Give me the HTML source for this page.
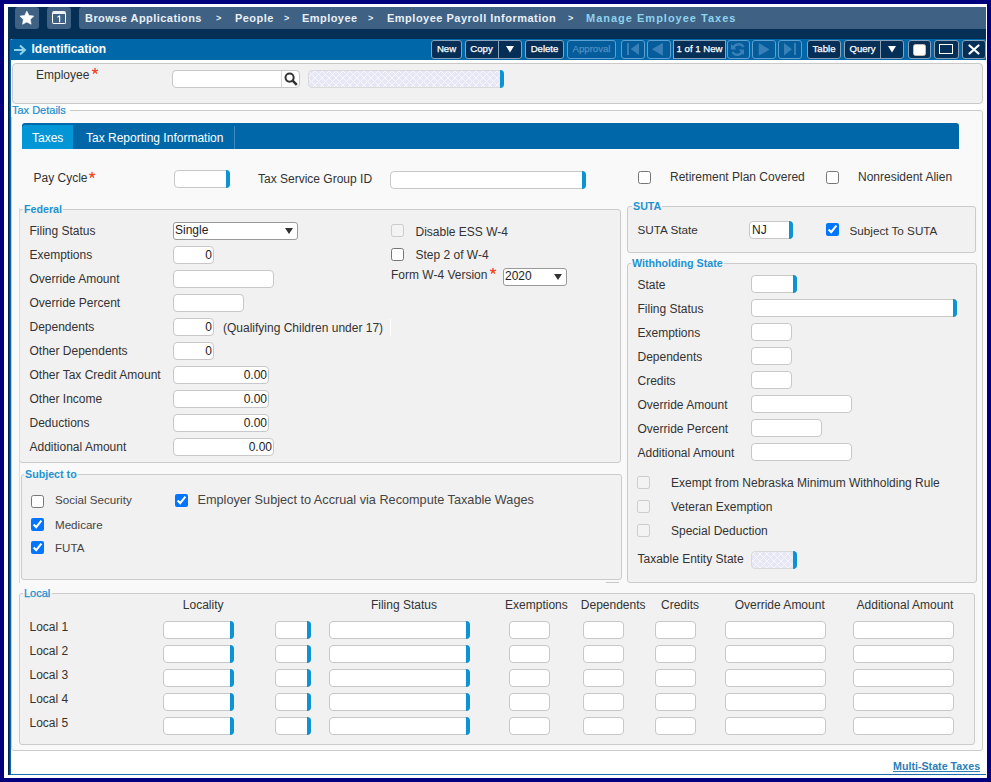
<!DOCTYPE html><html><head><meta charset="utf-8"><style>html,body{margin:0;padding:0;}body{width:991px;height:782px;position:relative;overflow:hidden;background:#00007f;font-family:"Liberation Sans", sans-serif;}</style></head><body>
<div style="position:absolute;left:4px;top:4px;width:983px;height:774px;background:#fff"></div>
<div style="position:absolute;left:8px;top:7px;width:978px;height:768px;background:#fff"></div>
<div style="position:absolute;left:8px;top:774px;width:978px;height:1px;background:#1a6eae"></div>
<div style="position:absolute;left:8px;top:7px;width:978px;height:32px;background:#062f56"></div>
<div style="position:absolute;left:15px;top:7px;width:24px;height:22px;background:#3e6184;border-radius:3px"></div>
<div style="position:absolute;left:47px;top:7px;width:24px;height:22px;background:#3e6184;border-radius:3px"></div>
<div style="position:absolute;left:79px;top:7px;width:907px;height:22px;background:#3e6184;border-radius:3px 0 0 3px"></div>
<svg style="position:absolute;left:0;top:0" width="60" height="30"><path d="M26.85 11.10 L28.99 15.43 L33.76 16.12 L30.31 19.49 L31.12 24.25 L26.85 22.01 L22.58 24.25 L23.39 19.49 L19.94 16.12 L24.71 15.43 Z" fill="#fff" stroke="#fff" stroke-width="0.6" stroke-linejoin="round"/></svg>
<div style="position:absolute;left:52px;top:11px;width:14px;height:13px;box-sizing:border-box;border:1px solid #fff;border-top:3px solid #eef1f4;border-radius:2px"></div>
<svg style="position:absolute;left:52px;top:11px" width="14" height="13"><path d="M7.6 4.6 V11.2 M5.4 6.4 L7.6 4.6" stroke="#fff" stroke-width="1.2" fill="none"/></svg>
<div style="position:absolute;left:85px;top:12.49px;line-height:13px;font-size:11px;color:#eaf0f6;font-weight:700;white-space:nowrap;letter-spacing:0.45px">Browse Applications</div>
<div style="position:absolute;left:216px;top:13.18px;line-height:11px;font-size:9px;color:#eaf0f6;font-weight:700;white-space:nowrap;">&gt;</div>
<div style="position:absolute;left:235px;top:12.49px;line-height:13px;font-size:11px;color:#eaf0f6;font-weight:700;white-space:nowrap;letter-spacing:0.45px">People</div>
<div style="position:absolute;left:284px;top:13.18px;line-height:11px;font-size:9px;color:#eaf0f6;font-weight:700;white-space:nowrap;">&gt;</div>
<div style="position:absolute;left:302px;top:12.49px;line-height:13px;font-size:11px;color:#eaf0f6;font-weight:700;white-space:nowrap;letter-spacing:0.45px">Employee</div>
<div style="position:absolute;left:368px;top:13.18px;line-height:11px;font-size:9px;color:#eaf0f6;font-weight:700;white-space:nowrap;">&gt;</div>
<div style="position:absolute;left:387px;top:12.49px;line-height:13px;font-size:11px;color:#eaf0f6;font-weight:700;white-space:nowrap;letter-spacing:0.5px">Employee Payroll Information</div>
<div style="position:absolute;left:568px;top:13.18px;line-height:11px;font-size:9px;color:#eaf0f6;font-weight:700;white-space:nowrap;">&gt;</div>
<div style="position:absolute;left:586px;top:12.49px;line-height:13px;font-size:11px;color:#8fd3ec;font-weight:700;white-space:nowrap;letter-spacing:1px">Manage Employee Taxes</div>
<div style="position:absolute;left:10px;top:39px;width:976px;height:21px;background:#0068a9;border-radius:3px 0 0 0"></div>
<svg style="position:absolute;left:13px;top:43px" width="14" height="14" viewBox="0 0 14 14"><path d="M1 7 H11.5 M7 2.5 L11.8 7 L7 11.5" stroke="#8dd2e8" stroke-width="2.2" fill="none"/></svg>
<div style="position:absolute;left:31.5px;top:41.64px;line-height:14px;font-size:12px;color:#fff;font-weight:700;white-space:nowrap;">Identification</div>
<div style="position:absolute;left:431px;top:40px;width:31px;height:19px;box-sizing:border-box;border:1px solid #8aa0b6;border-radius:3px;background:#062f58"></div>
<div style="position:absolute;left:431px;top:40px;width:31px;line-height:18px;text-align:center;font-size:9.6px;font-weight:400;-webkit-text-stroke:0.25px currentColor;color:#fff;white-space:nowrap">New</div>
<div style="position:absolute;left:465px;top:40px;width:57px;height:19px;box-sizing:border-box;border:1px solid #8aa0b6;border-radius:3px;background:#062f58"></div>
<div style="position:absolute;left:465px;top:40px;width:33px;line-height:18px;text-align:center;font-size:9.6px;font-weight:400;-webkit-text-stroke:0.25px currentColor;color:#fff">Copy</div>
<div style="position:absolute;left:498px;top:41px;width:1px;height:17px;background:#8aa0b6"></div>
<svg style="position:absolute;left:506px;top:46px" width="8" height="7"><path d="M0 0 H8 L4 6.5 Z" fill="#fff"/></svg>
<div style="position:absolute;left:525px;top:40px;width:39px;height:19px;box-sizing:border-box;border:1px solid #8aa0b6;border-radius:3px;background:#062f58"></div>
<div style="position:absolute;left:525px;top:40px;width:39px;line-height:18px;text-align:center;font-size:9.6px;font-weight:400;-webkit-text-stroke:0.25px currentColor;color:#fff;white-space:nowrap">Delete</div>
<div style="position:absolute;left:567px;top:40px;width:49px;height:19px;box-sizing:border-box;border:1px solid #5d9fd0;border-radius:3px;background:#045c9a"></div>
<div style="position:absolute;left:567px;top:40px;width:49px;line-height:18px;text-align:center;font-size:9.6px;font-weight:400;-webkit-text-stroke:0.25px currentColor;color:#4f8fc2;white-space:nowrap">Approval</div>
<div style="position:absolute;left:621px;top:40px;width:24px;height:19px;box-sizing:border-box;border:1px solid #5d9fd0;border-radius:3px;background:#045c9a"></div>
<div style="position:absolute;left:647px;top:40px;width:24px;height:19px;box-sizing:border-box;border:1px solid #5d9fd0;border-radius:3px;background:#045c9a"></div>
<svg style="position:absolute;left:621px;top:40px" width="24" height="19"><rect x="6" y="3" width="2" height="12" fill="#3a80b8"/><path d="M9.7 9 L18 3 V15 Z" fill="#3a80b8"/></svg>
<svg style="position:absolute;left:647px;top:40px" width="24" height="19"><path d="M4.9 9.3 L15.9 2.8 V15.8 Z" fill="#3a80b8"/></svg>
<div style="position:absolute;left:673px;top:40px;width:53px;height:19px;box-sizing:border-box;border:1px solid #8aa0b6;border-radius:0px;background:#062f58"></div>
<div style="position:absolute;left:673px;top:40px;width:53px;line-height:18px;text-align:center;font-size:9.6px;font-weight:400;-webkit-text-stroke:0.25px currentColor;color:#fff;white-space:nowrap">1 of 1 New</div>
<div style="position:absolute;left:727px;top:40px;width:23px;height:19px;box-sizing:border-box;border:1px solid #5d9fd0;border-radius:3px;background:#045c9a"></div>
<svg style="position:absolute;left:727px;top:40px" width="23" height="19"><path d="M6.5 8 A5.5 5.5 0 0 1 16.5 7" stroke="#3a80b8" stroke-width="2.4" fill="none"/><path d="M4 4 L4 9.5 L9.5 9.5 Z" fill="#3a80b8"/><path d="M15.5 11 A5.5 5.5 0 0 1 5.5 12" stroke="#3a80b8" stroke-width="2.4" fill="none"/><path d="M17 15 L17 9.5 L11.5 9.5 Z" fill="#3a80b8"/></svg>
<div style="position:absolute;left:752px;top:40px;width:24px;height:19px;box-sizing:border-box;border:1px solid #5d9fd0;border-radius:3px;background:#045c9a"></div>
<svg style="position:absolute;left:752px;top:40px" width="24" height="19"><path d="M6.8 3 L17.7 9.4 L6.8 15.8 Z" fill="#3a80b8"/></svg>
<div style="position:absolute;left:778px;top:40px;width:24px;height:19px;box-sizing:border-box;border:1px solid #5d9fd0;border-radius:3px;background:#045c9a"></div>
<svg style="position:absolute;left:778px;top:40px" width="24" height="19"><path d="M6 3 L13.9 9.2 L6 15.5 Z" fill="#3a80b8"/><rect x="16" y="3" width="2" height="12" fill="#3a80b8"/></svg>
<div style="position:absolute;left:807px;top:40px;width:34px;height:19px;box-sizing:border-box;border:1px solid #8aa0b6;border-radius:3px;background:#062f58"></div>
<div style="position:absolute;left:807px;top:40px;width:34px;line-height:18px;text-align:center;font-size:9.6px;font-weight:400;-webkit-text-stroke:0.25px currentColor;color:#fff;white-space:nowrap">Table</div>
<div style="position:absolute;left:844px;top:40px;width:60px;height:19px;box-sizing:border-box;border:1px solid #8aa0b6;border-radius:3px;background:#062f58"></div>
<div style="position:absolute;left:844px;top:40px;width:37px;line-height:18px;text-align:center;font-size:9.6px;font-weight:400;-webkit-text-stroke:0.25px currentColor;color:#fff">Query</div>
<div style="position:absolute;left:880px;top:41px;width:1px;height:17px;background:#8aa0b6"></div>
<svg style="position:absolute;left:888px;top:46px" width="8" height="7"><path d="M0 0 H8 L4 6.5 Z" fill="#fff"/></svg>
<div style="position:absolute;left:908px;top:40px;width:23px;height:19px;box-sizing:border-box;border:1px solid #8aa0b6;border-radius:3px;background:#062f58"></div>
<div style="position:absolute;left:913px;top:44px;width:13px;height:12px;box-sizing:border-box;background:#fff;border:1px solid #c9b9b0;border-radius:2.5px"></div>
<div style="position:absolute;left:934px;top:40px;width:25px;height:19px;box-sizing:border-box;border:1px solid #8aa0b6;border-radius:3px;background:#062f58"></div>
<div style="position:absolute;left:939px;top:44px;width:14px;height:10px;box-sizing:border-box;border:1.5px solid #fff"></div>
<div style="position:absolute;left:962px;top:40px;width:24px;height:19px;box-sizing:border-box;border:1px solid #8aa0b6;border-radius:3px;background:#062f58"></div>
<svg style="position:absolute;left:968px;top:44px" width="12" height="11"><path d="M1.5 1.5 L10.5 9.5 M10.5 1.5 L1.5 9.5" stroke="#fff" stroke-width="2.2" stroke-linecap="round"/></svg>
<div style="position:absolute;left:12px;top:63px;width:971px;height:41px;box-sizing:border-box;border:1px solid #c9c9c9;border-radius:4px;background:#f1f1f1"></div>
<div style="position:absolute;left:36px;top:67.84px;line-height:14px;font-size:12px;color:#333;font-weight:400;white-space:nowrap;">Employee</div>
<svg style="position:absolute;left:91px;top:67px" width="8" height="8" viewBox="-4 -4 8 8"><g stroke="#f7452a" stroke-width="1.35" stroke-linecap="round"><path d="M0 0 V-2.5"/><path d="M0 0 L-2.5 -0.7"/><path d="M0 0 L2.5 -0.7"/><path d="M0 0 L-1.5 2.2"/><path d="M0 0 L1.5 2.2"/></g></svg>
<div style="position:absolute;left:172px;top:70px;width:128px;height:18px;box-sizing:border-box;border:1px solid #c8c8c8;border-radius:4px;background:#fff;"></div>
<svg style="position:absolute;left:284px;top:72px" width="14" height="14" viewBox="0 0 14 14"><circle cx="5.6" cy="5.6" r="4.1" stroke="#333" stroke-width="2" fill="none"/><path d="M8.6 8.6 L12.8 12.8" stroke="#333" stroke-width="2.6"/></svg>
<div style="position:absolute;left:281px;top:71px;width:1px;height:16px;background:#d8d8d8"></div>
<div style="position:absolute;left:308px;top:70px;width:196px;height:18px;box-sizing:border-box;border:1px solid #dadada;border-radius:4px;background:repeating-linear-gradient(45deg, #f7f7fb 0 0.9px, transparent 0.9px 4.95px),repeating-linear-gradient(-45deg, #f7f7fb 0 0.9px, transparent 0.9px 4.95px), #e6e6f4;"><div style="position:absolute;right:-1px;top:-1px;width:4px;height:18px;background:#0b93d6;border-radius:0 4px 4px 0"></div></div>
<div style="position:absolute;left:11px;top:110px;width:972px;height:641px;box-sizing:border-box;border:1px solid #cbcbcb;border-radius:3px;background:#f9f9f9"></div>
<div style="position:absolute;left:11px;top:103.19px;line-height:14px;font-size:11px;font-weight:400;color:#1a8fd0;white-space:nowrap;padding:0 4px 0 1px;-webkit-text-stroke:0.2px #1a8fd0;background:linear-gradient(to bottom,transparent 0,transparent 6.81px,#f9f9f9 6.81px)">Tax Details</div>
<div style="position:absolute;left:22px;top:123px;width:937px;height:26px;background:#0067a9;border-radius:3px 3px 0 0"></div>
<div style="position:absolute;left:22px;top:125px;width:51px;height:24px;background:#0396d6;border-radius:3px 0 0 0"></div>
<div style="position:absolute;left:234px;top:126px;width:1px;height:23px;background:#3b88c2"></div>
<div style="position:absolute;left:32px;top:131.24px;line-height:14px;font-size:12px;color:#fff;font-weight:400;white-space:nowrap;">Taxes</div>
<div style="position:absolute;left:86px;top:131.24px;line-height:14px;font-size:12px;color:#fff;font-weight:400;white-space:nowrap;">Tax Reporting Information</div>
<div style="position:absolute;left:33.5px;top:171.04px;line-height:14px;font-size:12px;color:#333;font-weight:400;white-space:nowrap;">Pay Cycle</div>
<svg style="position:absolute;left:88.4px;top:170.5px" width="8" height="8" viewBox="-4 -4 8 8"><g stroke="#f7452a" stroke-width="1.35" stroke-linecap="round"><path d="M0 0 V-2.5"/><path d="M0 0 L-2.5 -0.7"/><path d="M0 0 L2.5 -0.7"/><path d="M0 0 L-1.5 2.2"/><path d="M0 0 L1.5 2.2"/></g></svg>
<div style="position:absolute;left:174px;top:170px;width:56px;height:18px;box-sizing:border-box;border:1px solid #c8c8c8;border-radius:4px;background:#fff;"><div style="position:absolute;right:-1px;top:-1px;width:4px;height:18px;background:#0b93d6;border-radius:0 4px 4px 0"></div></div>
<div style="position:absolute;left:258px;top:171.84px;line-height:14px;font-size:12px;color:#333;font-weight:400;white-space:nowrap;">Tax Service Group ID</div>
<div style="position:absolute;left:390px;top:171px;width:196px;height:18px;box-sizing:border-box;border:1px solid #c8c8c8;border-radius:4px;background:#fff;"><div style="position:absolute;right:-1px;top:-1px;width:4px;height:18px;background:#0b93d6;border-radius:0 4px 4px 0"></div></div>
<input type="checkbox"   style="position:absolute;left:638px;top:171px;width:13px;height:13px;margin:0">
<div style="position:absolute;left:670px;top:170.34px;line-height:14px;font-size:12px;color:#333;font-weight:400;white-space:nowrap;">Retirement Plan Covered</div>
<input type="checkbox"   style="position:absolute;left:826px;top:171px;width:13px;height:13px;margin:0">
<div style="position:absolute;left:858px;top:170.34px;line-height:14px;font-size:12px;color:#333;font-weight:400;white-space:nowrap;">Nonresident Alien</div>
<div style="position:absolute;left:19px;top:209px;width:602px;height:254px;box-sizing:border-box;border:1px solid #cbcbcb;border-radius:3px;background:#f1f1f1"></div>
<div style="position:absolute;left:23px;top:202.29px;line-height:14px;font-size:10.7px;font-weight:700;color:#1e93d2;white-space:nowrap;padding:0 1px 0 1px;background:linear-gradient(to bottom,transparent 0,transparent 6.71px,#f1f1f1 6.71px)">Federal</div>
<div style="position:absolute;left:173px;top:222px;width:125px;height:18px;box-sizing:border-box;border:1px solid #9a9a9a;border-radius:3px;background:#fff"></div>
<div style="position:absolute;left:175px;top:223.04px;line-height:14px;font-size:12px;color:#222;font-weight:400;white-space:nowrap;">Single</div>
<svg style="position:absolute;left:285px;top:228px" width="8" height="6"><path d="M0 0 H8 L4 6 Z" fill="#333"/></svg>
<div style="position:absolute;left:29.5px;top:223.84px;line-height:14px;font-size:12px;color:#333;font-weight:400;white-space:nowrap;">Filing Status</div>
<div style="position:absolute;left:29.5px;top:247.84px;line-height:14px;font-size:12px;color:#333;font-weight:400;white-space:nowrap;">Exemptions</div>
<div style="position:absolute;left:29.5px;top:271.84px;line-height:14px;font-size:12px;color:#333;font-weight:400;white-space:nowrap;">Override Amount</div>
<div style="position:absolute;left:29.5px;top:295.84px;line-height:14px;font-size:12px;color:#333;font-weight:400;white-space:nowrap;">Override Percent</div>
<div style="position:absolute;left:29.5px;top:319.84px;line-height:14px;font-size:12px;color:#333;font-weight:400;white-space:nowrap;">Dependents</div>
<div style="position:absolute;left:29.5px;top:343.84px;line-height:14px;font-size:12px;color:#333;font-weight:400;white-space:nowrap;">Other Dependents</div>
<div style="position:absolute;left:29.5px;top:367.84px;line-height:14px;font-size:12px;color:#333;font-weight:400;white-space:nowrap;">Other Tax Credit Amount</div>
<div style="position:absolute;left:29.5px;top:391.84px;line-height:14px;font-size:12px;color:#333;font-weight:400;white-space:nowrap;">Other Income</div>
<div style="position:absolute;left:29.5px;top:415.84px;line-height:14px;font-size:12px;color:#333;font-weight:400;white-space:nowrap;">Deductions</div>
<div style="position:absolute;left:29.5px;top:439.84px;line-height:14px;font-size:12px;color:#333;font-weight:400;white-space:nowrap;">Additional Amount</div>
<div style="position:absolute;left:173px;top:246px;width:41px;height:18px;box-sizing:border-box;border:1px solid #c8c8c8;border-radius:4px;background:#fff;"><div style="position:absolute;right:1px;top:0;line-height:16px;font-size:12px;color:#222">0</div></div>
<div style="position:absolute;left:173px;top:270px;width:101px;height:18px;box-sizing:border-box;border:1px solid #c8c8c8;border-radius:4px;background:#fff;"></div>
<div style="position:absolute;left:173px;top:294px;width:71px;height:18px;box-sizing:border-box;border:1px solid #c8c8c8;border-radius:4px;background:#fff;"></div>
<div style="position:absolute;left:173px;top:318px;width:41px;height:18px;box-sizing:border-box;border:1px solid #c8c8c8;border-radius:4px;background:#fff;"><div style="position:absolute;right:1px;top:0;line-height:16px;font-size:12px;color:#222">0</div></div>
<div style="position:absolute;left:223px;top:320.84px;line-height:14px;font-size:12px;color:#333;font-weight:400;white-space:nowrap;">(Qualifying Children under 17)</div>
<div style="position:absolute;left:390px;top:319px;width:1px;height:17px;background:#fff"></div>
<div style="position:absolute;left:173px;top:342px;width:41px;height:18px;box-sizing:border-box;border:1px solid #c8c8c8;border-radius:4px;background:#fff;"><div style="position:absolute;right:1px;top:0;line-height:16px;font-size:12px;color:#222">0</div></div>
<div style="position:absolute;left:173px;top:366px;width:96px;height:18px;box-sizing:border-box;border:1px solid #c8c8c8;border-radius:4px;background:#fff;"><div style="position:absolute;right:1px;top:0;line-height:16px;font-size:12px;color:#222">0.00</div></div>
<div style="position:absolute;left:173px;top:390px;width:96px;height:18px;box-sizing:border-box;border:1px solid #c8c8c8;border-radius:4px;background:#fff;"><div style="position:absolute;right:1px;top:0;line-height:16px;font-size:12px;color:#222">0.00</div></div>
<div style="position:absolute;left:173px;top:414px;width:96px;height:18px;box-sizing:border-box;border:1px solid #c8c8c8;border-radius:4px;background:#fff;"><div style="position:absolute;right:1px;top:0;line-height:16px;font-size:12px;color:#222">0.00</div></div>
<div style="position:absolute;left:173px;top:438px;width:101px;height:18px;box-sizing:border-box;border:1px solid #c8c8c8;border-radius:4px;background:#fff;"><div style="position:absolute;right:1px;top:0;line-height:16px;font-size:12px;color:#222">0.00</div></div>
<input type="checkbox"  disabled style="position:absolute;left:391px;top:224px;width:13px;height:13px;margin:0">
<div style="position:absolute;left:415.5px;top:225.14px;line-height:14px;font-size:12px;color:#333;font-weight:400;white-space:nowrap;">Disable ESS W-4</div>
<input type="checkbox"   style="position:absolute;left:391px;top:248px;width:13px;height:13px;margin:0">
<div style="position:absolute;left:415.5px;top:248.14px;line-height:14px;font-size:12px;color:#333;font-weight:400;white-space:nowrap;">Step 2 of W-4</div>
<div style="position:absolute;left:391px;top:267.84px;line-height:14px;font-size:12px;color:#333;font-weight:400;white-space:nowrap;">Form W-4 Version</div>
<svg style="position:absolute;left:489px;top:267px" width="8" height="8" viewBox="-4 -4 8 8"><g stroke="#f7452a" stroke-width="1.35" stroke-linecap="round"><path d="M0 0 V-2.5"/><path d="M0 0 L-2.5 -0.7"/><path d="M0 0 L2.5 -0.7"/><path d="M0 0 L-1.5 2.2"/><path d="M0 0 L1.5 2.2"/></g></svg>
<div style="position:absolute;left:503px;top:268px;width:64px;height:18px;box-sizing:border-box;border:1px solid #9a9a9a;border-radius:3px;background:#fff"></div>
<div style="position:absolute;left:505px;top:269.04px;line-height:14px;font-size:12px;color:#222;font-weight:400;white-space:nowrap;">2020</div>
<svg style="position:absolute;left:554px;top:274px" width="8" height="6"><path d="M0 0 H8 L4 6 Z" fill="#333"/></svg>
<div style="position:absolute;left:19px;top:208px;width:1px;height:375px;background:#dcdcdc"></div>
<div style="position:absolute;left:21px;top:474px;width:601px;height:106px;box-sizing:border-box;border:1px solid #cbcbcb;border-radius:3px;background:#f1f1f1"></div>
<div style="position:absolute;left:24px;top:467.29px;line-height:14px;font-size:10.7px;font-weight:700;color:#1e93d2;white-space:nowrap;padding:0 1px 0 1px;background:linear-gradient(to bottom,transparent 0,transparent 6.71px,#f1f1f1 6.71px)">Subject to</div>
<input type="checkbox"   style="position:absolute;left:31px;top:495px;width:13px;height:13px;margin:0">
<div style="position:absolute;left:55px;top:492.98px;line-height:14px;font-size:11.6px;color:#444;font-weight:400;white-space:nowrap;">Social Security</div>
<input type="checkbox" checked  style="position:absolute;left:31px;top:518px;width:13px;height:13px;margin:0">
<div style="position:absolute;left:55px;top:517.98px;line-height:14px;font-size:11.6px;color:#444;font-weight:400;white-space:nowrap;">Medicare</div>
<input type="checkbox" checked  style="position:absolute;left:31px;top:541px;width:13px;height:13px;margin:0">
<div style="position:absolute;left:55px;top:540.98px;line-height:14px;font-size:11.6px;color:#444;font-weight:400;white-space:nowrap;">FUTA</div>
<input type="checkbox" checked  style="position:absolute;left:175px;top:494px;width:13px;height:13px;margin:0">
<div style="position:absolute;left:197.5px;top:492.70px;line-height:15px;font-size:12.7px;color:#444;font-weight:400;white-space:nowrap;">Employer Subject to Accrual via Recompute Taxable Wages</div>
<div style="position:absolute;left:606px;top:582px;width:13px;height:1px;background:#c8c8c8"></div>
<div style="position:absolute;left:627px;top:206px;width:349px;height:47px;box-sizing:border-box;border:1px solid #cbcbcb;border-radius:3px;background:#f1f1f1"></div>
<div style="position:absolute;left:632px;top:199.29px;line-height:14px;font-size:10.7px;font-weight:700;color:#1e93d2;white-space:nowrap;padding:0 1px 0 1px;background:linear-gradient(to bottom,transparent 0,transparent 6.71px,#f1f1f1 6.71px)">SUTA</div>
<div style="position:absolute;left:637.5px;top:223.25px;line-height:14px;font-size:11.7px;color:#333;font-weight:400;white-space:nowrap;">SUTA State</div>
<div style="position:absolute;left:749px;top:221px;width:44px;height:18px;box-sizing:border-box;border:1px solid #c8c8c8;border-radius:4px;background:#fff;"><div style="position:absolute;right:-1px;top:-1px;width:4px;height:18px;background:#0b93d6;border-radius:0 4px 4px 0"></div><div style="position:absolute;left:2px;top:0;line-height:16px;font-size:12px;color:#222">NJ</div></div>
<input type="checkbox" checked  style="position:absolute;left:826px;top:223px;width:13px;height:13px;margin:0">
<div style="position:absolute;left:849.5px;top:224.45px;line-height:14px;font-size:11.7px;color:#333;font-weight:400;white-space:nowrap;">Subject To SUTA</div>
<div style="position:absolute;left:627px;top:263px;width:350px;height:320px;box-sizing:border-box;border:1px solid #cbcbcb;border-radius:3px;background:#f1f1f1"></div>
<div style="position:absolute;left:631px;top:256.29px;line-height:14px;font-size:10.7px;font-weight:700;color:#1e93d2;white-space:nowrap;padding:0 1px 0 1px;background:linear-gradient(to bottom,transparent 0,transparent 6.71px,#f1f1f1 6.71px)">Withholding State</div>
<div style="position:absolute;left:637.5px;top:277.84px;line-height:14px;font-size:12px;color:#333;font-weight:400;white-space:nowrap;">State</div>
<div style="position:absolute;left:637.5px;top:301.84px;line-height:14px;font-size:12px;color:#333;font-weight:400;white-space:nowrap;">Filing Status</div>
<div style="position:absolute;left:637.5px;top:325.84px;line-height:14px;font-size:12px;color:#333;font-weight:400;white-space:nowrap;">Exemptions</div>
<div style="position:absolute;left:637.5px;top:349.84px;line-height:14px;font-size:12px;color:#333;font-weight:400;white-space:nowrap;">Dependents</div>
<div style="position:absolute;left:637.5px;top:373.84px;line-height:14px;font-size:12px;color:#333;font-weight:400;white-space:nowrap;">Credits</div>
<div style="position:absolute;left:637.5px;top:397.84px;line-height:14px;font-size:12px;color:#333;font-weight:400;white-space:nowrap;">Override Amount</div>
<div style="position:absolute;left:637.5px;top:421.84px;line-height:14px;font-size:12px;color:#333;font-weight:400;white-space:nowrap;">Override Percent</div>
<div style="position:absolute;left:637.5px;top:445.84px;line-height:14px;font-size:12px;color:#333;font-weight:400;white-space:nowrap;">Additional Amount</div>
<div style="position:absolute;left:751px;top:275px;width:46px;height:18px;box-sizing:border-box;border:1px solid #c8c8c8;border-radius:4px;background:#fff;"><div style="position:absolute;right:-1px;top:-1px;width:4px;height:18px;background:#0b93d6;border-radius:0 4px 4px 0"></div></div>
<div style="position:absolute;left:751px;top:299px;width:206px;height:18px;box-sizing:border-box;border:1px solid #c8c8c8;border-radius:4px;background:#fff;"><div style="position:absolute;right:-1px;top:-1px;width:4px;height:18px;background:#0b93d6;border-radius:0 4px 4px 0"></div></div>
<div style="position:absolute;left:751px;top:323px;width:41px;height:18px;box-sizing:border-box;border:1px solid #c8c8c8;border-radius:4px;background:#fff;"></div>
<div style="position:absolute;left:751px;top:347px;width:41px;height:18px;box-sizing:border-box;border:1px solid #c8c8c8;border-radius:4px;background:#fff;"></div>
<div style="position:absolute;left:751px;top:371px;width:41px;height:18px;box-sizing:border-box;border:1px solid #c8c8c8;border-radius:4px;background:#fff;"></div>
<div style="position:absolute;left:751px;top:395px;width:101px;height:18px;box-sizing:border-box;border:1px solid #c8c8c8;border-radius:4px;background:#fff;"></div>
<div style="position:absolute;left:751px;top:419px;width:71px;height:18px;box-sizing:border-box;border:1px solid #c8c8c8;border-radius:4px;background:#fff;"></div>
<div style="position:absolute;left:751px;top:443px;width:101px;height:18px;box-sizing:border-box;border:1px solid #c8c8c8;border-radius:4px;background:#fff;"></div>
<input type="checkbox"  disabled style="position:absolute;left:637px;top:476px;width:13px;height:13px;margin:0">
<div style="position:absolute;left:671px;top:476.34px;line-height:14px;font-size:12px;color:#333;font-weight:400;white-space:nowrap;">Exempt from Nebraska Minimum Withholding Rule</div>
<input type="checkbox"  disabled style="position:absolute;left:637px;top:500px;width:13px;height:13px;margin:0">
<div style="position:absolute;left:671px;top:500.34px;line-height:14px;font-size:12px;color:#333;font-weight:400;white-space:nowrap;">Veteran Exemption</div>
<input type="checkbox"  disabled style="position:absolute;left:637px;top:524px;width:13px;height:13px;margin:0">
<div style="position:absolute;left:671px;top:524.34px;line-height:14px;font-size:12px;color:#333;font-weight:400;white-space:nowrap;">Special Deduction</div>
<div style="position:absolute;left:637.5px;top:551.84px;line-height:14px;font-size:12px;color:#333;font-weight:400;white-space:nowrap;">Taxable Entity State</div>
<div style="position:absolute;left:751px;top:551px;width:46px;height:18px;box-sizing:border-box;border:1px solid #dadada;border-radius:4px;background:repeating-linear-gradient(45deg, #f7f7fb 0 0.9px, transparent 0.9px 4.95px),repeating-linear-gradient(-45deg, #f7f7fb 0 0.9px, transparent 0.9px 4.95px), #e6e6f4;"><div style="position:absolute;right:-1px;top:-1px;width:4px;height:18px;background:#0b93d6;border-radius:0 4px 4px 0"></div></div>
<div style="position:absolute;left:19px;top:593px;width:956px;height:152px;box-sizing:border-box;border:1px solid #cbcbcb;border-radius:3px;background:#f1f1f1"></div>
<div style="position:absolute;left:23px;top:586.19px;line-height:14px;font-size:11px;font-weight:400;color:#1a8fd0;white-space:nowrap;padding:0 2px 0 1px;-webkit-text-stroke:0.25px #1a8fd0;background:linear-gradient(to bottom,transparent 0,transparent 6.81px,#f1f1f1 6.81px)">Local</div>
<div style="position:absolute;left:182.8px;top:598.24px;line-height:14px;font-size:12px;color:#333;font-weight:400;white-space:nowrap;">Locality</div>
<div style="position:absolute;left:370.9px;top:598.24px;line-height:14px;font-size:12px;color:#333;font-weight:400;white-space:nowrap;">Filing Status</div>
<div style="position:absolute;left:505.1px;top:598.24px;line-height:14px;font-size:12px;color:#333;font-weight:400;white-space:nowrap;">Exemptions</div>
<div style="position:absolute;left:580.8px;top:598.24px;line-height:14px;font-size:12px;color:#333;font-weight:400;white-space:nowrap;">Dependents</div>
<div style="position:absolute;left:661.0px;top:598.24px;line-height:14px;font-size:12px;color:#333;font-weight:400;white-space:nowrap;">Credits</div>
<div style="position:absolute;left:734.7px;top:598.24px;line-height:14px;font-size:12px;color:#333;font-weight:400;white-space:nowrap;">Override Amount</div>
<div style="position:absolute;left:856.6px;top:598.24px;line-height:14px;font-size:12px;color:#333;font-weight:400;white-space:nowrap;">Additional Amount</div>
<div style="position:absolute;left:29.5px;top:619.84px;line-height:14px;font-size:12px;color:#333;font-weight:400;white-space:nowrap;">Local 1</div>
<div style="position:absolute;left:163px;top:621px;width:71px;height:18px;box-sizing:border-box;border:1px solid #c8c8c8;border-radius:4px;background:#fff;"><div style="position:absolute;right:-1px;top:-1px;width:4px;height:18px;background:#0b93d6;border-radius:0 4px 4px 0"></div></div>
<div style="position:absolute;left:275px;top:621px;width:36px;height:18px;box-sizing:border-box;border:1px solid #c8c8c8;border-radius:4px;background:#fff;"><div style="position:absolute;right:-1px;top:-1px;width:4px;height:18px;background:#0b93d6;border-radius:0 4px 4px 0"></div></div>
<div style="position:absolute;left:329px;top:621px;width:141px;height:18px;box-sizing:border-box;border:1px solid #c8c8c8;border-radius:4px;background:#fff;"><div style="position:absolute;right:-1px;top:-1px;width:4px;height:18px;background:#0b93d6;border-radius:0 4px 4px 0"></div></div>
<div style="position:absolute;left:509px;top:621px;width:41px;height:18px;box-sizing:border-box;border:1px solid #c8c8c8;border-radius:4px;background:#fff;"></div>
<div style="position:absolute;left:583px;top:621px;width:41px;height:18px;box-sizing:border-box;border:1px solid #c8c8c8;border-radius:4px;background:#fff;"></div>
<div style="position:absolute;left:655px;top:621px;width:41px;height:18px;box-sizing:border-box;border:1px solid #c8c8c8;border-radius:4px;background:#fff;"></div>
<div style="position:absolute;left:725px;top:621px;width:101px;height:18px;box-sizing:border-box;border:1px solid #c8c8c8;border-radius:4px;background:#fff;"></div>
<div style="position:absolute;left:853px;top:621px;width:101px;height:18px;box-sizing:border-box;border:1px solid #c8c8c8;border-radius:4px;background:#fff;"></div>
<div style="position:absolute;left:29.5px;top:643.84px;line-height:14px;font-size:12px;color:#333;font-weight:400;white-space:nowrap;">Local 2</div>
<div style="position:absolute;left:163px;top:645px;width:71px;height:18px;box-sizing:border-box;border:1px solid #c8c8c8;border-radius:4px;background:#fff;"><div style="position:absolute;right:-1px;top:-1px;width:4px;height:18px;background:#0b93d6;border-radius:0 4px 4px 0"></div></div>
<div style="position:absolute;left:275px;top:645px;width:36px;height:18px;box-sizing:border-box;border:1px solid #c8c8c8;border-radius:4px;background:#fff;"><div style="position:absolute;right:-1px;top:-1px;width:4px;height:18px;background:#0b93d6;border-radius:0 4px 4px 0"></div></div>
<div style="position:absolute;left:329px;top:645px;width:141px;height:18px;box-sizing:border-box;border:1px solid #c8c8c8;border-radius:4px;background:#fff;"><div style="position:absolute;right:-1px;top:-1px;width:4px;height:18px;background:#0b93d6;border-radius:0 4px 4px 0"></div></div>
<div style="position:absolute;left:509px;top:645px;width:41px;height:18px;box-sizing:border-box;border:1px solid #c8c8c8;border-radius:4px;background:#fff;"></div>
<div style="position:absolute;left:583px;top:645px;width:41px;height:18px;box-sizing:border-box;border:1px solid #c8c8c8;border-radius:4px;background:#fff;"></div>
<div style="position:absolute;left:655px;top:645px;width:41px;height:18px;box-sizing:border-box;border:1px solid #c8c8c8;border-radius:4px;background:#fff;"></div>
<div style="position:absolute;left:725px;top:645px;width:101px;height:18px;box-sizing:border-box;border:1px solid #c8c8c8;border-radius:4px;background:#fff;"></div>
<div style="position:absolute;left:853px;top:645px;width:101px;height:18px;box-sizing:border-box;border:1px solid #c8c8c8;border-radius:4px;background:#fff;"></div>
<div style="position:absolute;left:29.5px;top:667.84px;line-height:14px;font-size:12px;color:#333;font-weight:400;white-space:nowrap;">Local 3</div>
<div style="position:absolute;left:163px;top:669px;width:71px;height:18px;box-sizing:border-box;border:1px solid #c8c8c8;border-radius:4px;background:#fff;"><div style="position:absolute;right:-1px;top:-1px;width:4px;height:18px;background:#0b93d6;border-radius:0 4px 4px 0"></div></div>
<div style="position:absolute;left:275px;top:669px;width:36px;height:18px;box-sizing:border-box;border:1px solid #c8c8c8;border-radius:4px;background:#fff;"><div style="position:absolute;right:-1px;top:-1px;width:4px;height:18px;background:#0b93d6;border-radius:0 4px 4px 0"></div></div>
<div style="position:absolute;left:329px;top:669px;width:141px;height:18px;box-sizing:border-box;border:1px solid #c8c8c8;border-radius:4px;background:#fff;"><div style="position:absolute;right:-1px;top:-1px;width:4px;height:18px;background:#0b93d6;border-radius:0 4px 4px 0"></div></div>
<div style="position:absolute;left:509px;top:669px;width:41px;height:18px;box-sizing:border-box;border:1px solid #c8c8c8;border-radius:4px;background:#fff;"></div>
<div style="position:absolute;left:583px;top:669px;width:41px;height:18px;box-sizing:border-box;border:1px solid #c8c8c8;border-radius:4px;background:#fff;"></div>
<div style="position:absolute;left:655px;top:669px;width:41px;height:18px;box-sizing:border-box;border:1px solid #c8c8c8;border-radius:4px;background:#fff;"></div>
<div style="position:absolute;left:725px;top:669px;width:101px;height:18px;box-sizing:border-box;border:1px solid #c8c8c8;border-radius:4px;background:#fff;"></div>
<div style="position:absolute;left:853px;top:669px;width:101px;height:18px;box-sizing:border-box;border:1px solid #c8c8c8;border-radius:4px;background:#fff;"></div>
<div style="position:absolute;left:29.5px;top:691.84px;line-height:14px;font-size:12px;color:#333;font-weight:400;white-space:nowrap;">Local 4</div>
<div style="position:absolute;left:163px;top:693px;width:71px;height:18px;box-sizing:border-box;border:1px solid #c8c8c8;border-radius:4px;background:#fff;"><div style="position:absolute;right:-1px;top:-1px;width:4px;height:18px;background:#0b93d6;border-radius:0 4px 4px 0"></div></div>
<div style="position:absolute;left:275px;top:693px;width:36px;height:18px;box-sizing:border-box;border:1px solid #c8c8c8;border-radius:4px;background:#fff;"><div style="position:absolute;right:-1px;top:-1px;width:4px;height:18px;background:#0b93d6;border-radius:0 4px 4px 0"></div></div>
<div style="position:absolute;left:329px;top:693px;width:141px;height:18px;box-sizing:border-box;border:1px solid #c8c8c8;border-radius:4px;background:#fff;"><div style="position:absolute;right:-1px;top:-1px;width:4px;height:18px;background:#0b93d6;border-radius:0 4px 4px 0"></div></div>
<div style="position:absolute;left:509px;top:693px;width:41px;height:18px;box-sizing:border-box;border:1px solid #c8c8c8;border-radius:4px;background:#fff;"></div>
<div style="position:absolute;left:583px;top:693px;width:41px;height:18px;box-sizing:border-box;border:1px solid #c8c8c8;border-radius:4px;background:#fff;"></div>
<div style="position:absolute;left:655px;top:693px;width:41px;height:18px;box-sizing:border-box;border:1px solid #c8c8c8;border-radius:4px;background:#fff;"></div>
<div style="position:absolute;left:725px;top:693px;width:101px;height:18px;box-sizing:border-box;border:1px solid #c8c8c8;border-radius:4px;background:#fff;"></div>
<div style="position:absolute;left:853px;top:693px;width:101px;height:18px;box-sizing:border-box;border:1px solid #c8c8c8;border-radius:4px;background:#fff;"></div>
<div style="position:absolute;left:29.5px;top:715.84px;line-height:14px;font-size:12px;color:#333;font-weight:400;white-space:nowrap;">Local 5</div>
<div style="position:absolute;left:163px;top:717px;width:71px;height:18px;box-sizing:border-box;border:1px solid #c8c8c8;border-radius:4px;background:#fff;"><div style="position:absolute;right:-1px;top:-1px;width:4px;height:18px;background:#0b93d6;border-radius:0 4px 4px 0"></div></div>
<div style="position:absolute;left:275px;top:717px;width:36px;height:18px;box-sizing:border-box;border:1px solid #c8c8c8;border-radius:4px;background:#fff;"><div style="position:absolute;right:-1px;top:-1px;width:4px;height:18px;background:#0b93d6;border-radius:0 4px 4px 0"></div></div>
<div style="position:absolute;left:329px;top:717px;width:141px;height:18px;box-sizing:border-box;border:1px solid #c8c8c8;border-radius:4px;background:#fff;"><div style="position:absolute;right:-1px;top:-1px;width:4px;height:18px;background:#0b93d6;border-radius:0 4px 4px 0"></div></div>
<div style="position:absolute;left:509px;top:717px;width:41px;height:18px;box-sizing:border-box;border:1px solid #c8c8c8;border-radius:4px;background:#fff;"></div>
<div style="position:absolute;left:583px;top:717px;width:41px;height:18px;box-sizing:border-box;border:1px solid #c8c8c8;border-radius:4px;background:#fff;"></div>
<div style="position:absolute;left:655px;top:717px;width:41px;height:18px;box-sizing:border-box;border:1px solid #c8c8c8;border-radius:4px;background:#fff;"></div>
<div style="position:absolute;left:725px;top:717px;width:101px;height:18px;box-sizing:border-box;border:1px solid #c8c8c8;border-radius:4px;background:#fff;"></div>
<div style="position:absolute;left:853px;top:717px;width:101px;height:18px;box-sizing:border-box;border:1px solid #c8c8c8;border-radius:4px;background:#fff;"></div>
<div style="position:absolute;left:8px;top:39px;width:3px;height:736px;background:linear-gradient(to right,#00214c 0,#00295a 1px,#053f78 1px,#053f78 2px,#0a65aa 2px)"></div>
<div style="position:absolute;left:893px;top:759px;line-height:14px;font-size:10.7px;font-weight:700;color:#2b80b6;text-decoration:underline;white-space:nowrap">Multi-State Taxes</div>
</body></html>
